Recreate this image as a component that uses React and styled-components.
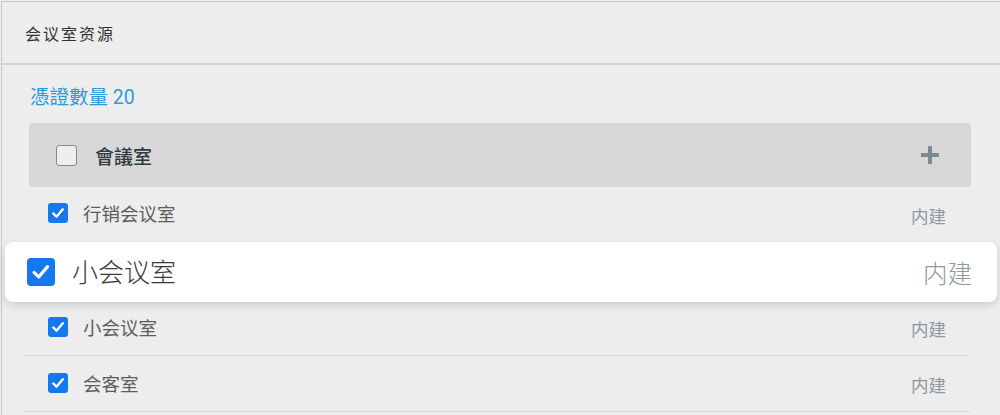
import React from "react";
import styled, { createGlobalStyle } from "styled-components";

const rooms = [
  { name: "行销会议室", tag: "内建" },
  { name: "小会议室", tag: "内建", dragging: true },
  { name: "小会议室", tag: "内建" },
  { name: "会客室", tag: "内建" },
];

function App() {
  return (
    <>
      <GlobalStyle />
      <Panel>
        <Header>会议室资源</Header>
        <Body>
          <Count>憑證數量 20</Count>
          <GroupHeader>
            <Checkbox $size={21} />
            <GroupTitle>會議室</GroupTitle>
            <AddButton aria-label="add">
              <svg width="18" height="18" viewBox="0 0 18 18">
                <rect x="7" y="0" width="4" height="18" rx="0.5" fill="currentColor" />
                <rect x="0" y="7" width="18" height="4" rx="0.5" fill="currentColor" />
              </svg>
            </AddButton>
          </GroupHeader>

          {rooms.map((room, i) =>
            room.dragging ? (
              <DragCard key={i}>
                <Label $gap={17}>
                  <Checkbox checked $size={28} />
                  <CardName>{room.name}</CardName>
                </Label>
                <CardTag>{room.tag}</CardTag>
              </DragCard>
            ) : (
              <Row key={i}>
                <Label $gap={15} $lift={i === 0 ? 4 : 2}>
                  <Checkbox checked $size={20} />
                  <Name>{room.name}</Name>
                </Label>
                <Tag>{room.tag}</Tag>
              </Row>
            )
          )}
        </Body>
      </Panel>
    </>
  );
}

function Checkbox({ checked, $size }) {
  return (
    <Box $checked={checked} $size={$size}>
      {checked && (
        <svg width="70%" height="70%" viewBox="0 0 16 16">
          <polyline
            points="2.5,8.5 6.3,12.2 13.5,3.8"
            fill="none"
            stroke="#fff"
            strokeWidth="2.6"
            strokeLinecap="round"
            strokeLinejoin="round"
          />
        </svg>
      )}
    </Box>
  );
}

export default App;

const GlobalStyle = createGlobalStyle`
  body {
    margin: 0;
    background: #ededed;
    overflow: hidden;
    font-family: Roboto, "Noto Sans CJK SC", "Noto Sans CJK TC", sans-serif;
  }
`;

const Panel = styled.div`
  margin: 1px 0 0 1px;
  width: 1040px;
  min-height: 414px;
  border-top: 1px solid #c6c6c6;
  border-left: 1px solid #c6c6c6;
  box-sizing: border-box;
`;

const Header = styled.div`
  height: 61px;
  display: flex;
  align-items: center;
  padding-left: 23px;
  border-bottom: 2px solid #cdd4d8;
  font-size: 16px;
  letter-spacing: 2px;
  color: #333;
`;

const Body = styled.div`
  width: 947px;
  padding: 21px 0 0 21px;
`;

const Count = styled.div`
  padding-left: 7px;
  line-height: 24px;
  font-size: 19.5px;
  color: #2d9ad8;
  margin-bottom: 13px;
`;

const GroupHeader = styled.div`
  margin-left: 6px;
  width: 942px;
  height: 64px;
  box-sizing: border-box;
  background: #d8d8d8;
  border-radius: 3px;
  display: flex;
  align-items: center;
  gap: 18px;
  padding: 0 32px 0 27px;
`;

const GroupTitle = styled.span`
  flex: 1;
  font-size: 19px;
  font-weight: 500;
  color: #2f3a40;
`;

const AddButton = styled.span`
  display: flex;
  color: #7b8b95;
`;

const Box = styled.span`
  flex: none;
  display: flex;
  align-items: center;
  justify-content: center;
  width: ${(p) => p.$size}px;
  height: ${(p) => p.$size}px;
  box-sizing: border-box;
  border-radius: ${(p) => (p.$size > 24 ? 4 : 3)}px;
  background: ${(p) => (p.$checked ? "#1479f0" : "#eeeeee")};
  border: ${(p) => (p.$checked ? "none" : "1.5px solid #8a8a8a")};
`;

const Row = styled.div`
  height: 56px;
  box-sizing: border-box;
  border-bottom: 1px solid #dcdcdc;
  display: flex;
  align-items: center;
  justify-content: space-between;
  padding: 0 24px 0 25px;
`;

const Label = styled.div`
  display: flex;
  align-items: center;
  gap: ${(p) => p.$gap}px;
  margin-bottom: ${(p) => p.$lift || 0}px;
`;

const Name = styled.span`
  font-size: 18.5px;
  color: #5c5c5c;
`;

const Tag = styled.span`
  font-size: 17.5px;
  color: #8d9aa1;
  margin-top: 2px;
`;

const DragCard = styled.div`
  position: relative;
  z-index: 1;
  height: 60px;
  margin: -1px -27px -2px -18px;
  box-sizing: border-box;
  background: #fff;
  border-radius: 8px;
  box-shadow: 0 3px 8px rgba(0, 0, 0, 0.14);
  display: flex;
  align-items: center;
  justify-content: space-between;
  padding: 0 25px 0 22px;
`;

const CardName = styled.span`
  font-size: 26px;
  font-weight: 300;
  color: #3a3a3a;
  margin-bottom: 4px;
`;

const CardTag = styled.span`
  font-size: 24.5px;
  font-weight: 300;
  color: #8d9aa1;
  margin-top: 1px;
`;
